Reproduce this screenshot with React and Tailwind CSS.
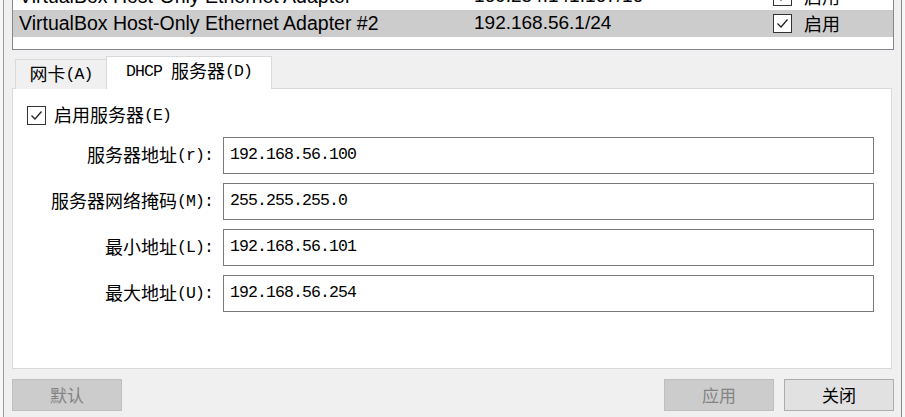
import React from "react";

const UI = "font-['Liberation_Sans','Noto_Sans_CJK_SC',sans-serif]";
const CJK = "font-['Noto_Sans_CJK_SC',sans-serif]";
const MONO = "font-['Liberation_Mono',monospace] text-[16.5px] tracking-[-0.9px]";

// SimSun-like text: CJK full width, ASCII half width
const Song = ({ text }) =>
  text
    .split(/([\x00-\x7f]+)/)
    .filter(Boolean)
    .map((part, i) =>
      /^[\x00-\x7f]+$/.test(part) ? (
        <span key={i} className={MONO + " whitespace-pre relative -top-[2px]"}>
          {part}
        </span>
      ) : (
        <span key={i}>{part}</span>
      )
    );

const Check = ({ checked = true }) => (
  <span className="w-[19px] h-[19px] border border-[#333333] bg-white flex items-center justify-center shrink-0">
    {checked && (
      <svg width="15" height="15" viewBox="0 0 15 15">
        <path d="M2.5 7.5 L6 11 L12.5 3.5" fill="none" stroke="#222222" strokeWidth="1.3" />
      </svg>
    )}
  </span>
);

const rows = [
  { name: "VirtualBox Host-Only Ethernet Adapter", ip: "169.254.141.167/16", sel: false },
  { name: "VirtualBox Host-Only Ethernet Adapter #2", ip: "192.168.56.1/24", sel: true },
];

const fields = [
  { label: "服务器地址(r):", value: "192.168.56.100" },
  { label: "服务器网络掩码(M):", value: "255.255.255.0" },
  { label: "最小地址(L):", value: "192.168.56.101" },
  { label: "最大地址(U):", value: "192.168.56.254" },
];

export default function App() {
  return (
    <div className="w-[905px] h-[417px] overflow-hidden flex bg-white text-black">
      <div className="w-[3px] bg-[#f7f7f7]" />
      <div className="w-px bg-[#9a9a9a]" />

      <div className="flex-1 bg-[#f0f0f0] flex flex-col pl-[8px] pr-[7px]">
        {/* adapter list */}
        <div className="-mt-[18px] border border-[#828790] bg-white">
          {rows.map((r) => (
            <div
              key={r.name}
              className={
                "h-[27px] flex items-center text-[19.5px] " +
                UI +
                (r.sel ? " bg-[#cccccc]" : "")
              }
            >
              <span className="w-[461px] pl-[6px] whitespace-nowrap">{r.name}</span>
              <span className="w-[299px] whitespace-nowrap text-[19px]">{r.ip}</span>
              <Check />
              <span className={"ml-[12px] text-[18px] " + CJK}>启用</span>
            </div>
          ))}
          <div className="h-[12px]" />
        </div>

        {/* tabs */}
        <div className="mt-[6px] flex items-end pl-[3px] h-[33px] relative z-10">
          <div className={"w-[92px] h-[30px] border border-b-0 border-[#d9d9d9] bg-[#f0f0f0] flex items-center justify-center text-[18px] " + CJK}>
            <span>
              <Song text="网卡(A)" />
            </span>
          </div>
          <div className={"w-[166px] h-[33px] -ml-px border border-b-0 border-[#d9d9d9] bg-white flex items-center justify-center text-[18px] pb-[2px] " + CJK}>
            <span>
              <Song text="DHCP 服务器(D)" />
            </span>
          </div>
        </div>

        {/* panel */}
        <div className={"-mt-px mr-[2px] h-[281px] border border-[#d9d9d9] bg-white flex flex-col text-[18px] " + CJK}>
          <label className="mt-[17px] ml-[14px] flex items-center gap-[8px] h-[19px]">
            <Check />
            <span>
              <Song text="启用服务器(E)" />
            </span>
          </label>
          <div className="mt-[12px] flex flex-col gap-[9px] pr-[17px]">
            {fields.map((f) => (
              <div key={f.label} className="flex items-center">
                <span className="w-[200px] text-right whitespace-nowrap">
                  <Song text={f.label} />
                </span>
                <div className="ml-[10px] flex-1 h-[37px] border border-[#7a7a7a] bg-white flex items-center pl-[6px]">
                  <span className={MONO}>{f.value}</span>
                </div>
              </div>
            ))}
          </div>
        </div>

        {/* buttons */}
        <div className={"mt-[10px] flex gap-[10px] text-[17px] " + CJK}>
          <button className="w-[110px] h-[32px] border border-[#bfbfbf] bg-[#cccccc] text-[#838383]">默认</button>
          <div className="flex-1" />
          <button className="w-[110px] h-[32px] border border-[#bfbfbf] bg-[#cccccc] text-[#838383]">应用</button>
          <button className="w-[110px] h-[32px] border border-[#adadad] bg-[#e1e1e1]">关闭</button>
        </div>
      </div>

      <div className="w-px bg-[#888888]" />
      <div className="w-[3px] bg-[#f7f7f7]" />
    </div>
  );
}
